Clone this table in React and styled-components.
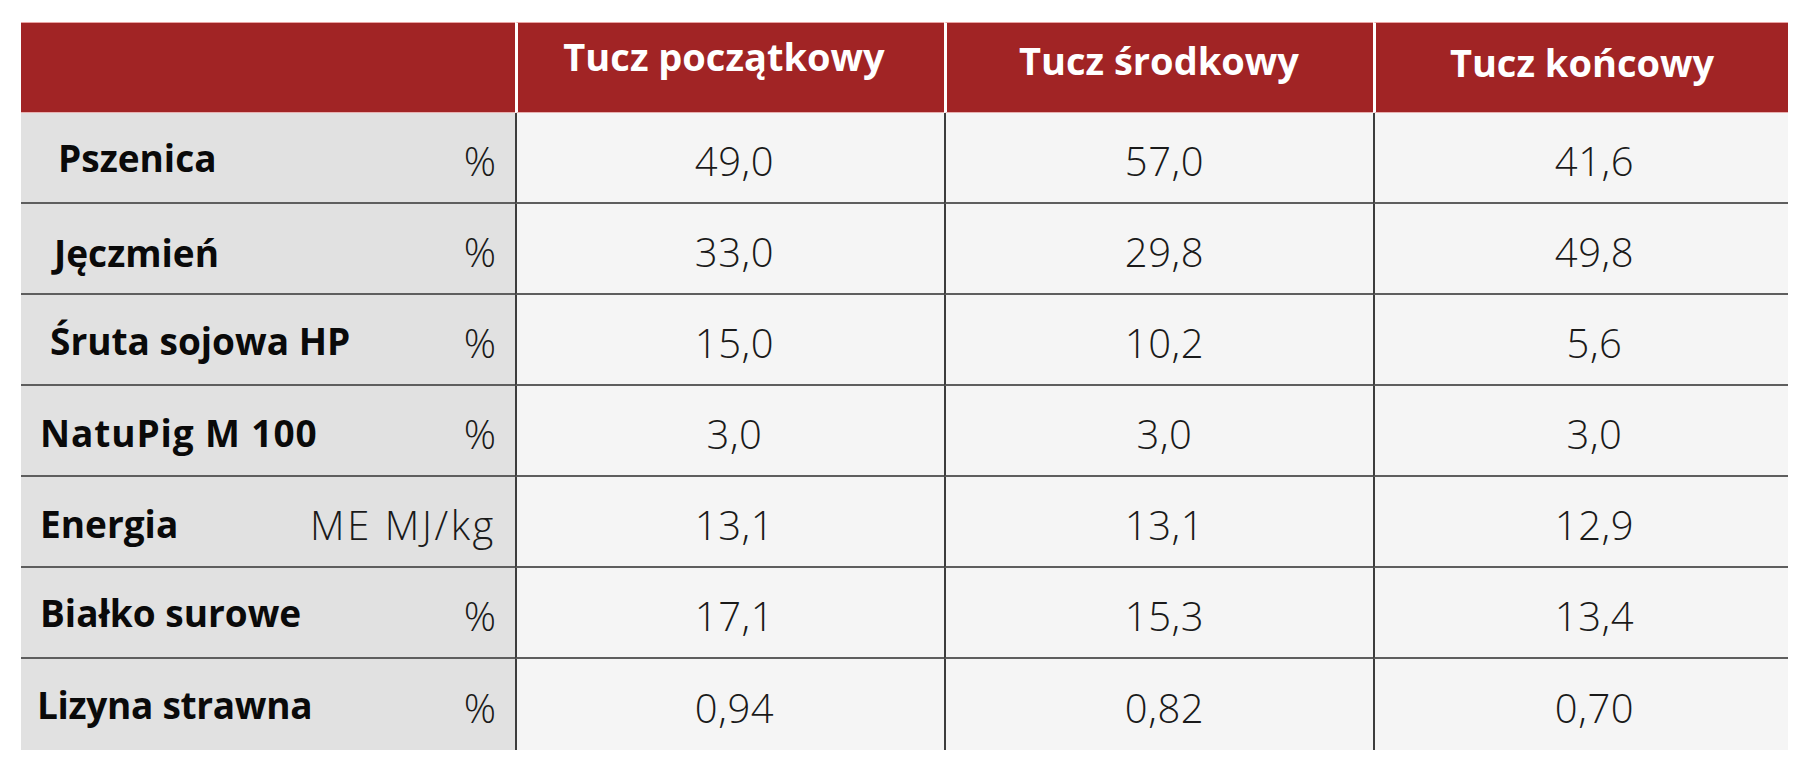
import React from "react";
import styled, { createGlobalStyle } from "styled-components";

const Global = createGlobalStyle`
  html, body { margin: 0; padding: 0; background: #ffffff; }
  body { font-family: "Open Sans", "Noto Sans", sans-serif; }
`;

const Page = styled.div`
  padding: 22px 0 0 21px;
`;

const Table = styled.div`
  display: grid;
  grid-template-columns: 494px 429px 429px 415px;
  width: 1767px;
`;

const HeadCell = styled.div`
  box-sizing: border-box;
  height: 91px;
  background: #a12425;
  border-top: 1px solid #e9a3a3;
  border-bottom: 1px solid #e7b0b0;
  border-left: ${(p) => (p.$first ? "none" : "3px solid #ffffff")};
  display: flex;
  justify-content: center;
  align-items: flex-start;
  padding-top: ${(p) => p.$top}px;
  padding-right: ${(p) => p.$pullLeft || 0}px;
  color: #ffffff;
  font-weight: 700;
  font-size: 38px;
  line-height: 46px;
  white-space: nowrap;
`;

const LabelCell = styled.div`
  box-sizing: border-box;
  height: 91px;
  background: #e1e1e1;
  border-bottom: ${(p) => (p.$last ? "none" : "2px solid #5e5e5e")};
  display: flex;
  align-items: center;
  justify-content: space-between;
  padding: 0 19px 0 ${(p) => p.$indent}px;
`;

const Label = styled.span`
  font-weight: 700;
  font-size: 37px;
  letter-spacing: ${(p) => p.$ls || 0}px;
  color: #0a0a0a;
  white-space: nowrap;
  padding-top: ${(p) => p.$dy}px;
`;

const Unit = styled.span`
  font-weight: 300;
  font-size: 40px;
  letter-spacing: ${(p) => (p.$wide ? "2.6px" : "0")};
  color: #1a1a1a;
  white-space: nowrap;
  padding-top: 5px;
`;

const ValueCell = styled.div`
  box-sizing: border-box;
  height: 91px;
  background: #f5f5f5;
  border-left: 2px solid #3d3d3d;
  border-bottom: ${(p) => (p.$last ? "none" : "2px solid #5e5e5e")};
  display: flex;
  align-items: center;
  justify-content: center;
  padding-left: ${(p) => p.$shift}px;
  font-weight: 300;
  font-size: 40px;
  letter-spacing: 0.6px;
  color: #1a1a1a;
`;

const Value = styled.span`
  padding-top: 5px;
`;

const headers = [
  { text: "Tucz początkowy", top: 10, pull: 14 },
  { text: "Tucz środkowy", top: 14, pull: 2 },
  { text: "Tucz końcowy", top: 16, pull: 0 },
];

const rows = [
  { label: "Pszenica", unit: "%", indent: 37, dy: 0, ls: 0, values: ["49,0", "57,0", "41,6"] },
  { label: "Jęczmień", unit: "%", indent: 33, dy: 8, ls: 0, values: ["33,0", "29,8", "49,8"] },
  { label: "Śruta sojowa HP", unit: "%", indent: 29, dy: 2, ls: 0, values: ["15,0", "10,2", "5,6"] },
  { label: "NatuPig M 100", unit: "%", indent: 19, dy: 4, ls: 0.9, values: ["3,0", "3,0", "3,0"] },
  { label: "Energia", unit: "ME MJ/kg", indent: 19, dy: 4, ls: 0, values: ["13,1", "13,1", "12,9"] },
  { label: "Białko surowe", unit: "%", indent: 19, dy: 0, ls: 0, values: ["17,1", "15,3", "13,4"] },
  { label: "Lizyna strawna", unit: "%", indent: 16, dy: 0, ls: -0.3, values: ["0,94", "0,82", "0,70"] },
];

const valueShift = [8, 10, 26];

export default function App() {
  return (
    <>
      <Global />
      <Page>
        <Table>
          <HeadCell $first $top={10} />
          {headers.map((h) => (
            <HeadCell key={h.text} $top={h.top} $pullLeft={h.pull}>
              {h.text}
            </HeadCell>
          ))}
          {rows.map((r, i) => {
            const last = i === rows.length - 1;
            return (
              <React.Fragment key={r.label}>
                <LabelCell $indent={r.indent} $last={last}>
                  <Label $dy={r.dy} $ls={r.ls}>{r.label}</Label>
                  <Unit $wide={r.unit.length > 1}>{r.unit}</Unit>
                </LabelCell>
                {r.values.map((v, j) => (
                  <ValueCell key={j} $last={last} $shift={valueShift[j]}>
                    <Value>{v}</Value>
                  </ValueCell>
                ))}
              </React.Fragment>
            );
          })}
        </Table>
      </Page>
    </>
  );
}
